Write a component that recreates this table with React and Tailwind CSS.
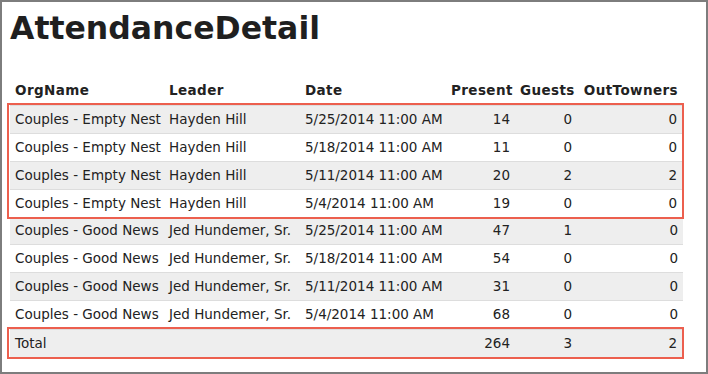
import React from 'react';

const rows = [
  { org: 'Couples - Empty Nest', leader: 'Hayden Hill', date: '5/25/2014 11:00 AM', present: 14, guests: 0, out: 0 },
  { org: 'Couples - Empty Nest', leader: 'Hayden Hill', date: '5/18/2014 11:00 AM', present: 11, guests: 0, out: 0 },
  { org: 'Couples - Empty Nest', leader: 'Hayden Hill', date: '5/11/2014 11:00 AM', present: 20, guests: 2, out: 2 },
  { org: 'Couples - Empty Nest', leader: 'Hayden Hill', date: '5/4/2014 11:00 AM', present: 19, guests: 0, out: 0 },
  { org: 'Couples - Good News', leader: 'Jed Hundemer, Sr.', date: '5/25/2014 11:00 AM', present: 47, guests: 1, out: 0 },
  { org: 'Couples - Good News', leader: 'Jed Hundemer, Sr.', date: '5/18/2014 11:00 AM', present: 54, guests: 0, out: 0 },
  { org: 'Couples - Good News', leader: 'Jed Hundemer, Sr.', date: '5/11/2014 11:00 AM', present: 31, guests: 0, out: 0 },
  { org: 'Couples - Good News', leader: 'Jed Hundemer, Sr.', date: '5/4/2014 11:00 AM', present: 68, guests: 0, out: 0 },
];

const cols = 'grid grid-cols-[154px_136px_146px_69px_62px_1fr]';

const Row = ({ r, shaded }) => (
  <div className={`${cols} h-[28px] border-t border-[#dddddd] leading-[27px] ${shaded ? 'bg-[#eeeeee]' : 'bg-white'}`}>
    <div className="px-[5px] whitespace-nowrap">{r.org}</div>
    <div className="px-[5px] whitespace-nowrap">{r.leader}</div>
    <div className="px-[5px] whitespace-nowrap">{r.date}</div>
    <div className="px-[5px] text-right">{r.present}</div>
    <div className="px-[5px] text-right">{r.guests}</div>
    <div className="px-[5px] text-right">{r.out}</div>
  </div>
);

// red annotation frame around a group of rows
const Marked = ({ children }) => (
  <div className="relative z-10 -ml-[3px] -mr-[1px] -mt-[1px] -mb-[3px] pl-px border-2 border-[#ec5f4e]">
    {children}
  </div>
);

export default function App() {
  return (
    <div
      className="w-[708px] h-[374px] border-2 border-[#7d7d7d] bg-white pt-[8px] text-[#222222] overflow-hidden"
      style={{ fontFamily: '"DejaVu Sans", Verdana, sans-serif' }}
    >
      <h1 className="ml-[8px] text-[31.5px] leading-[36px] font-bold text-[#1f1f1f]">AttendanceDetail</h1>

      <div className="ml-[8px] mt-[30px] w-[673px] text-[13.5px]">
        <div className={`${cols} h-[28px] leading-[28px] font-bold tracking-[0.4px]`}>
          <div className="px-[5px]">OrgName</div>
          <div className="px-[5px]">Leader</div>
          <div className="px-[5px]">Date</div>
          <div className="px-[5px] text-right">Present</div>
          <div className="px-[5px] text-right">Guests</div>
          <div className="px-[5px] text-right">OutTowners</div>
        </div>

        <Marked>
          {rows.slice(0, 4).map((r, i) => (
            <Row key={i} r={r} shaded={i % 2 === 0} />
          ))}
        </Marked>

        {rows.slice(4).map((r, i) => (
          <Row key={i + 4} r={r} shaded={i % 2 === 0} />
        ))}

        <Marked>
          <div className={`${cols} h-[28px] border-t border-[#dddddd] leading-[27px] bg-[#eeeeee]`}>
            <div className="px-[5px]">Total</div>
            <div />
            <div />
            <div className="px-[5px] text-right">264</div>
            <div className="px-[5px] text-right">3</div>
            <div className="px-[5px] text-right">2</div>
          </div>
        </Marked>
      </div>
    </div>
  );
}
